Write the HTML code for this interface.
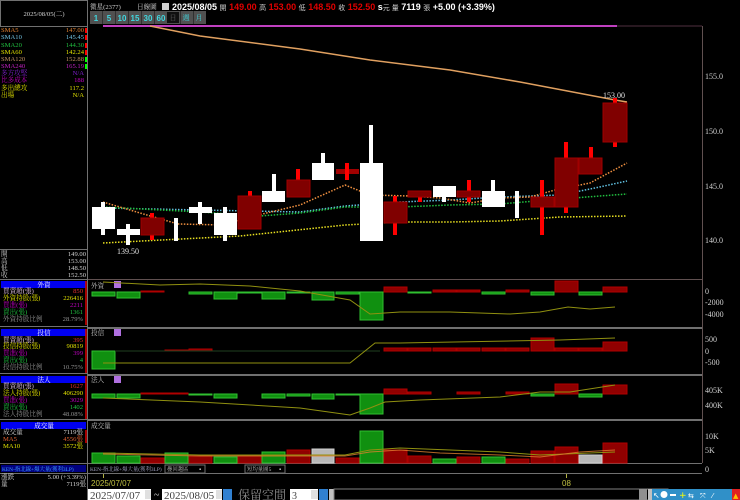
<!DOCTYPE html>
<html><head><meta charset="utf-8"><style>
html,body{margin:0;padding:0;background:#000;width:740px;height:500px;overflow:hidden}
svg{display:block;font-family:"Liberation Serif","Noto Serif CJK SC",serif;font-size:6.6px}
</style></head><body>
<svg width="740" height="500" viewBox="0 0 740 500" xmlns="http://www.w3.org/2000/svg">
<rect width="740" height="500" fill="#000"/>
<rect x="0.5" y="0.5" width="87" height="26" fill="none" stroke="#707070"/>
<text x="44" y="16" fill="#d0d0d0" text-anchor="middle">2025/08/05(二)</text>
<line x1="87.5" y1="0" x2="87.5" y2="500" stroke="#707070"/>
<g>
<text x="1" y="32" fill="#e08030">SMA5</text><text x="84" y="32" fill="#e08030" text-anchor="end">147.00</text>
<text x="1" y="39" fill="#70c0e0">SMA10</text><text x="84" y="39" fill="#70c0e0" text-anchor="end">145.45</text>
<text x="1" y="47" fill="#20c040">SMA20</text><text x="84" y="47" fill="#20c040" text-anchor="end">144.30</text>
<text x="1" y="54" fill="#e0e000">SMA60</text><text x="84" y="54" fill="#e0e000" text-anchor="end">142.24</text>
<text x="1" y="61" fill="#c09060">SMA120</text><text x="84" y="61" fill="#c09060" text-anchor="end">152.88</text>
<text x="1" y="68" fill="#c020c0">SMA240</text><text x="84" y="68" fill="#c020c0" text-anchor="end">165.19</text>
<text x="1" y="75" fill="#8020d0">多方攻堅</text><text x="84" y="75" fill="#8020d0" text-anchor="end">N/A</text>
<text x="1" y="82" fill="#c000c0">比多成本</text><text x="84" y="82" fill="#c000c0" text-anchor="end">188</text>
<text x="1" y="90" fill="#e0e000">多出總攻</text><text x="84" y="90" fill="#e0e000" text-anchor="end">117.2</text>
<text x="1" y="97" fill="#e0e000">出場</text><text x="84" y="97" fill="#e0e000" text-anchor="end">N/A</text>
<rect x="85" y="28" width="2" height="5" fill="#f00"/><rect x="85" y="35" width="2" height="5" fill="#f00"/><rect x="85" y="43" width="2" height="5" fill="#f00"/><rect x="85" y="50" width="2" height="5" fill="#f00"/><rect x="85" y="57" width="2" height="5" fill="#0f0"/><rect x="85" y="64" width="2" height="5" fill="#0f0"/>
</g>
<line x1="0" y1="249.5" x2="87" y2="249.5" stroke="#707070"/>
<text x="1" y="256" fill="#d0d0d0">開</text><text x="86" y="256" fill="#d0d0d0" text-anchor="end">149.00</text>
<text x="1" y="263" fill="#d0d0d0">高</text><text x="86" y="263" fill="#d0d0d0" text-anchor="end">153.00</text>
<text x="1" y="270" fill="#d0d0d0">低</text><text x="86" y="270" fill="#d0d0d0" text-anchor="end">148.50</text>
<text x="1" y="277" fill="#d0d0d0">收</text><text x="86" y="277" fill="#d0d0d0" text-anchor="end">152.50</text>
<line x1="0" y1="279.5" x2="87" y2="279.5" stroke="#707070"/>
<g>
<rect x="1" y="281" width="85" height="7" fill="#0000f0"/><text x="44" y="287" fill="#fff" text-anchor="middle">外資</text>
<text x="3" y="293" fill="#e0c0e0">買賣超(張)</text><text x="83" y="293" fill="#e03030" text-anchor="end">850</text>
<text x="3" y="300" fill="#e0e000">外資持股(張)</text><text x="83" y="300" fill="#e0e000" text-anchor="end">226416</text>
<text x="3" y="307" fill="#c000c0">買進(張)</text><text x="83" y="307" fill="#c000c0" text-anchor="end">2211</text>
<text x="3" y="314" fill="#20c040">賣出(張)</text><text x="83" y="314" fill="#20c040" text-anchor="end">1361</text>
<text x="3" y="321" fill="#909090">外資持股比例</text><text x="83" y="321" fill="#909090" text-anchor="end">28.79%</text>
<line x1="0" y1="326.5" x2="87" y2="326.5" stroke="#707070"/>
<rect x="1" y="329" width="85" height="7" fill="#0000f0"/><text x="44" y="335" fill="#fff" text-anchor="middle">投信</text>
<text x="3" y="342" fill="#e0c0e0">買賣超(張)</text><text x="83" y="342" fill="#e03030" text-anchor="end">395</text>
<text x="3" y="348" fill="#e0e000">投信持股(張)</text><text x="83" y="348" fill="#e0e000" text-anchor="end">90819</text>
<text x="3" y="355" fill="#c000c0">買進(張)</text><text x="83" y="355" fill="#c000c0" text-anchor="end">399</text>
<text x="3" y="362" fill="#20c040">賣出(張)</text><text x="83" y="362" fill="#20c040" text-anchor="end">4</text>
<text x="3" y="369" fill="#909090">投信持股比例</text><text x="83" y="369" fill="#909090" text-anchor="end">10.75%</text>
<line x1="0" y1="373.5" x2="87" y2="373.5" stroke="#707070"/>
<rect x="1" y="376" width="85" height="7" fill="#0000f0"/><text x="44" y="382" fill="#fff" text-anchor="middle">法人</text>
<text x="3" y="388" fill="#e0c0e0">買賣超(張)</text><text x="83" y="388" fill="#e03030" text-anchor="end">1627</text>
<text x="3" y="395" fill="#e0e000">法人持股(張)</text><text x="83" y="395" fill="#e0e000" text-anchor="end">406290</text>
<text x="3" y="402" fill="#c000c0">買進(張)</text><text x="83" y="402" fill="#c000c0" text-anchor="end">3029</text>
<text x="3" y="409" fill="#20c040">賣出(張)</text><text x="83" y="409" fill="#20c040" text-anchor="end">1402</text>
<text x="3" y="416" fill="#909090">法人持股比例</text><text x="83" y="416" fill="#909090" text-anchor="end">48.08%</text>
<line x1="0" y1="419.5" x2="87" y2="419.5" stroke="#707070"/>
<rect x="1" y="422" width="85" height="7" fill="#0000f0"/><text x="44" y="428" fill="#fff" text-anchor="middle">成交量</text>
<text x="3" y="434" fill="#d0d0d0">成交量</text><text x="83" y="434" fill="#d0d0d0" text-anchor="end">7119張</text>
<text x="3" y="441" fill="#e06030">MA5</text><text x="83" y="441" fill="#e06030" text-anchor="end">4556張</text>
<text x="3" y="448" fill="#e0e000">MA10</text><text x="83" y="448" fill="#e0e000" text-anchor="end">3572張</text>
<rect x="85" y="281" width="2" height="44" fill="#d00000" opacity=".8"/>
<rect x="85" y="329" width="2" height="44" fill="#d00000" opacity=".8"/>
<rect x="85" y="376" width="2" height="43" fill="#d00000" opacity=".8"/>
<rect x="85" y="430" width="2" height="13" fill="#d00000" opacity=".8"/>
<line x1="0" y1="463.5" x2="87" y2="463.5" stroke="#707070"/>
<rect x="1" y="465" width="85" height="7" fill="#000080"/><text x="2" y="471" fill="#40a0ff" font-size="5.4">KEN-指北線+爆大量(獲利3LP)</text>
<line x1="0" y1="473.5" x2="87" y2="473.5" stroke="#707070"/>
<text x="1" y="479" fill="#d0d0d0">漲跌</text><text x="86" y="479" fill="#d0d0d0" text-anchor="end">5.00 (+3.39%)</text>
<text x="1" y="486" fill="#d0d0d0">量</text><text x="86" y="486" fill="#d0d0d0" text-anchor="end">7119張</text>
</g>

<text x="90" y="9" fill="#d0d0d0">微星(2377)</text>
<text x="137" y="9" fill="#d0d0d0">日線圖</text>
<rect x="162" y="3" width="7" height="7" fill="#d0d0d0"/>
<text x="172" y="10" font-family="Liberation Sans, Noto Sans CJK TC, sans-serif" font-size="9" font-weight="bold" fill="#fff">2025/08/05 <tspan fill="#ccc" font-weight="normal" font-size="7">開</tspan> <tspan fill="#e00000">149.00</tspan> <tspan fill="#ccc" font-weight="normal" font-size="7">高</tspan> <tspan fill="#e00000">153.00</tspan> <tspan fill="#ccc" font-weight="normal" font-size="7">低</tspan> <tspan fill="#e00000">148.50</tspan> <tspan fill="#ccc" font-weight="normal" font-size="7">收</tspan> <tspan fill="#e00000">152.50</tspan> s<tspan fill="#ccc" font-weight="normal" font-size="7">元 量</tspan> 7119 <tspan fill="#ccc" font-weight="normal" font-size="7">張</tspan> +5.00 (+3.39%)</text>
<rect x="90" y="11" width="116" height="13" fill="#505050"/>
<rect x="167" y="12" width="12" height="11" fill="#101010"/>
<g text-anchor="middle" font-size="8" font-family="Liberation Sans, sans-serif" font-weight="bold" fill="#40d8e0">
<text x="96" y="21">1</text>
<text x="109" y="21">5</text>
<text x="122" y="21">10</text>
<text x="135" y="21">15</text>
<text x="148" y="21">30</text>
<text x="161" y="21">60</text>
</g>
<g text-anchor="middle" font-size="7">
<text x="173" y="20" fill="#606060">日</text>
<text x="186" y="20" fill="#40d8e0">週</text>
<text x="199" y="20" fill="#40d8e0">月</text>
</g>
<g stroke="#303030"><line x1="102.5" y1="11" x2="102.5" y2="24"/><line x1="115.5" y1="11" x2="115.5" y2="24"/><line x1="128.5" y1="11" x2="128.5" y2="24"/><line x1="141.5" y1="11" x2="141.5" y2="24"/><line x1="154.5" y1="11" x2="154.5" y2="24"/><line x1="180.5" y1="11" x2="180.5" y2="24"/><line x1="193.5" y1="11" x2="193.5" y2="24"/></g>

<line x1="103" y1="26" x2="617" y2="26" stroke="#c040c0" stroke-width="2"/>
<line x1="617" y1="26" x2="702" y2="26" stroke="#503040"/>
<line x1="702.5" y1="26" x2="702.5" y2="463" stroke="#605050"/>
<line x1="88" y1="279.5" x2="702" y2="279.5" stroke="#605050"/>
<rect x="88" y="327" width="614" height="2" fill="#707070"/>
<rect x="88" y="374" width="614" height="2" fill="#707070"/>
<rect x="88" y="419" width="614" height="2" fill="#707070"/>
<line x1="88" y1="463.5" x2="702" y2="463.5" stroke="#707070"/>
<line x1="88" y1="473.5" x2="702" y2="473.5" stroke="#707070"/>

<g fill="#d0d0d0" font-size="8">
<text x="705" y="79">155.0</text><text x="705" y="134">150.0</text><text x="705" y="189">145.0</text><text x="705" y="243">140.0</text>
<text x="705" y="294">0</text><text x="705" y="305">-2000</text><text x="705" y="317">-4000</text>
<text x="705" y="342">500</text><text x="705" y="354">0</text><text x="705" y="365">-500</text>
<text x="705" y="393">405K</text><text x="705" y="408">400K</text>
<text x="705" y="439">10K</text><text x="705" y="453">5K</text><text x="705" y="472">0</text>
</g>

<polyline points="150,26 200,36 300,49 370,60 450,70 520,82 615,100 627,102" fill="none" stroke="#e0a060" stroke-width="1.5"/>

<g fill="none" stroke-width="1.5" stroke-dasharray="1.5 1.5">
<polyline stroke="#60c0e0" points="103,208 200,210 300,212 345,206 400,202 450,200 500,197 560,195 595,188 627,181"/>
<polyline stroke="#20c040" points="103,207 200,212 260,216 300,213 345,207 400,207 450,205 500,204 560,199 600,196 627,194"/>
<polyline stroke="#e8e020" points="103,243 240,236 345,225 400,222 450,222 500,221 560,217 627,216"/>
<polyline stroke="#f09040" points="103,202 140,213 178,224 225,225 250,217 300,205 345,185 370,195 410,196 440,198 470,203 500,198 530,197 555,190 590,183 627,163"/>
</g>

<g>
<rect x="101" y="202" width="4" height="33" fill="#fff"/><rect x="92" y="207" width="23" height="22" fill="#fff"/>
<rect x="126" y="224" width="4" height="21" fill="#fff"/><rect x="117" y="229" width="23" height="6" fill="#fff"/>
<rect x="150" y="213" width="4" height="27" fill="#f00"/><rect x="141" y="218" width="23" height="17" fill="#800000" stroke="#a00000"/>
<rect x="174" y="218" width="4" height="23" fill="#fff"/>
<rect x="198" y="202" width="4" height="22" fill="#fff"/><rect x="189" y="207" width="23" height="6" fill="#fff"/>
<rect x="223" y="207" width="4" height="34" fill="#fff"/><rect x="214" y="213" width="23" height="22" fill="#fff"/>
<rect x="248" y="191" width="4" height="38" fill="#f00"/><rect x="238" y="196" width="23" height="33" fill="#800000" stroke="#a00000"/>
<rect x="272" y="174" width="4" height="28" fill="#fff"/><rect x="262" y="191" width="23" height="11" fill="#fff"/>
<rect x="296" y="169" width="4" height="28" fill="#f00"/><rect x="287" y="180" width="23" height="17" fill="#800000" stroke="#a00000"/>
<rect x="321" y="153" width="4" height="27" fill="#fff"/><rect x="312" y="163" width="22" height="17" fill="#fff"/>
<rect x="336" y="169" width="23" height="5" fill="#a00000"/><rect x="345" y="163" width="4" height="17" fill="#f00"/>
<rect x="369" y="125" width="4" height="116" fill="#fff"/><rect x="360" y="163" width="23" height="78" fill="#fff"/>
<rect x="393" y="196" width="4" height="39" fill="#f00"/><rect x="384" y="202" width="23" height="21" fill="#800000" stroke="#a00000"/>
<rect x="418" y="191" width="4" height="11" fill="#f00"/><rect x="408" y="191" width="23" height="6" fill="#800000" stroke="#a00000"/>
<rect x="442" y="186" width="4" height="16" fill="#fff"/><rect x="433" y="186" width="23" height="11" fill="#fff"/>
<rect x="467" y="180" width="4" height="22" fill="#f00"/><rect x="457" y="191" width="23" height="6" fill="#800000" stroke="#a00000"/>
<rect x="491" y="180" width="4" height="27" fill="#fff"/><rect x="482" y="191" width="23" height="16" fill="#fff"/>
<rect x="515" y="191" width="4" height="27" fill="#fff"/>
<rect x="540" y="180" width="4" height="55" fill="#f00"/><rect x="531" y="197" width="23" height="10" fill="#800000" stroke="#a00000"/>
<rect x="564" y="142" width="4" height="71" fill="#f00"/><rect x="555" y="158" width="23" height="49" fill="#800000" stroke="#a00000"/>
<rect x="589" y="147" width="4" height="27" fill="#f00"/><rect x="579" y="158" width="23" height="16" fill="#800000" stroke="#a00000"/>
<rect x="613" y="98" width="4" height="49" fill="#f00"/><rect x="603" y="103" width="24" height="39" fill="#800000" stroke="#a00000"/>
</g>
<text x="117" y="254" fill="#e0e0e0" font-size="8">139.50</text>
<text x="603" y="98" fill="#e0e0e0" font-size="8">153.00</text>

<text x="91" y="288" fill="#c0c0c0">外資</text><rect x="114" y="281" width="7" height="7" fill="#b070e0"/>
<text x="91" y="335" fill="#c0c0c0">投信</text><rect x="114" y="329" width="7" height="7" fill="#b070e0"/>
<text x="91" y="382" fill="#c0c0c0">法人</text><rect x="114" y="376" width="7" height="7" fill="#b070e0"/>
<text x="91" y="428" fill="#c0c0c0">成交量</text>

<g fill="#109010" stroke="#30c030">
<rect x="92" y="292" width="23" height="4"/><rect x="117" y="292" width="23" height="6"/><rect x="189" y="292" width="23" height="2"/><rect x="214" y="292" width="23" height="7"/><rect x="238" y="292" width="23" height="1"/><rect x="262" y="292" width="23" height="7"/><rect x="287" y="292" width="23" height="1"/><rect x="312" y="292" width="22" height="8"/><rect x="336" y="292" width="23" height="2"/><rect x="360" y="292" width="23" height="28"/><rect x="531" y="292" width="23" height="3"/><rect x="579" y="292" width="23" height="3"/>
<rect x="408" y="292" width="23" height="1"/><rect x="482" y="292" width="23" height="2"/>
</g>
<g fill="#900000" stroke="#b00000">
<rect x="141" y="291" width="23" height="1"/><rect x="384" y="287" width="23" height="5"/><rect x="555" y="281" width="23" height="11"/><rect x="603" y="287" width="24" height="5"/><rect x="433" y="290" width="23" height="2"/><rect x="457" y="290" width="23" height="2"/><rect x="506" y="290" width="23" height="2"/>
</g>
<polyline points="103,282 160,285 200,284 250,286 300,291 350,300 370,314 400,312 450,312 510,314 540,312 568,307 590,309 615,307" fill="none" stroke="#909010"/>

<g fill="#109010" stroke="#30c030"><rect x="92" y="351" width="23" height="18"/></g>
<g fill="#900000" stroke="#b00000">
<rect x="165" y="350" width="23" height="1"/><rect x="189" y="349" width="23" height="2"/><rect x="384" y="348" width="23" height="3"/><rect x="408" y="348" width="23" height="3"/><rect x="433" y="348" width="23" height="3"/><rect x="457" y="348" width="23" height="3"/><rect x="482" y="348" width="23" height="3"/><rect x="506" y="348" width="23" height="3"/><rect x="531" y="338" width="23" height="13"/><rect x="555" y="348" width="23" height="3"/><rect x="579" y="348" width="23" height="3"/><rect x="603" y="342" width="24" height="9"/>
</g>
<line x1="115" y1="351" x2="380" y2="351" stroke="#204020"/>
<polyline points="103,363 350,363 375,343 400,343 560,340 615,338" fill="none" stroke="#909010"/>

<g fill="#109010" stroke="#30c030">
<rect x="92" y="394" width="23" height="4"/><rect x="117" y="394" width="23" height="4"/><rect x="189" y="394" width="23" height="1"/><rect x="214" y="394" width="23" height="4"/><rect x="262" y="394" width="23" height="4"/><rect x="287" y="394" width="23" height="2"/><rect x="312" y="394" width="22" height="5"/><rect x="336" y="394" width="23" height="1"/><rect x="360" y="394" width="23" height="20"/><rect x="531" y="394" width="23" height="2"/><rect x="579" y="394" width="23" height="3"/>
</g>
<g fill="#900000" stroke="#b00000">
<rect x="141" y="393" width="23" height="1"/><rect x="165" y="393" width="23" height="1"/><rect x="384" y="389" width="23" height="5"/><rect x="408" y="392" width="23" height="2"/><rect x="457" y="392" width="23" height="2"/><rect x="506" y="392" width="23" height="2"/><rect x="555" y="384" width="23" height="10"/><rect x="603" y="385" width="24" height="9"/>
</g>
<polyline points="103,398 200,402 300,408 350,415 370,408 385,402 420,400 500,397 540,392 570,392 615,385" fill="none" stroke="#909010"/>

<g fill="#109010" stroke="#30c030">
<rect x="92" y="453" width="23" height="10"/><rect x="117" y="456" width="23" height="7"/><rect x="165" y="453" width="23" height="10"/><rect x="214" y="457" width="23" height="6"/><rect x="262" y="452" width="23" height="11"/><rect x="360" y="431" width="23" height="32"/><rect x="433" y="459" width="23" height="4"/><rect x="482" y="457" width="23" height="6"/>
</g>
<g fill="#900000" stroke="#b00000">
<rect x="141" y="458" width="23" height="5"/><rect x="189" y="456" width="23" height="7"/><rect x="238" y="455" width="23" height="8"/><rect x="287" y="450" width="23" height="13"/><rect x="336" y="458" width="23" height="5"/><rect x="384" y="450" width="23" height="13"/><rect x="408" y="456" width="23" height="7"/><rect x="457" y="457" width="23" height="6"/><rect x="506" y="459" width="23" height="4"/><rect x="531" y="451" width="23" height="12"/><rect x="555" y="447" width="23" height="16"/><rect x="603" y="443" width="24" height="20"/>
</g>
<g fill="#b8b8b8" stroke="#d0d0d0"><rect x="312" y="449" width="22" height="14"/><rect x="579" y="455" width="23" height="8"/></g>
<polyline points="103,453 200,455 300,455 345,455 370,450 400,448 500,452 540,455 615,452" fill="none" stroke="#909010"/>
<polyline points="103,454 200,456 300,456 345,456 370,452 400,450 440,453 500,455 540,457 580,452 615,450" fill="none" stroke="#e08030" opacity=".8"/>

<text x="90" y="471" fill="#a0a0c0" font-size="5.4">KEN-指北線+爆大量(獲利3LP)</text>
<rect x="165" y="465" width="40" height="8" fill="#000" stroke="#707070"/><text x="167" y="471" fill="#c0c0c0" font-size="5.4">疊回趨區</text><text x="199" y="471" fill="#c0c0c0" font-size="6">▪</text>
<rect x="245" y="465" width="40" height="8" fill="#000" stroke="#707070"/><text x="247" y="471" fill="#c0c0c0" font-size="5.4">短均量圖5</text><text x="279" y="471" fill="#c0c0c0" font-size="6">▪</text>
<line x1="103.5" y1="474" x2="103.5" y2="478" stroke="#b0b040"/>
<text x="91" y="486" fill="#c0c040" font-size="8" font-family="Liberation Sans, sans-serif">2025/07/07</text>
<line x1="566.5" y1="474" x2="566.5" y2="478" stroke="#b0b040"/>
<text x="562" y="486" fill="#c0c040" font-size="8" font-family="Liberation Sans, sans-serif">08</text>

<rect x="88" y="489" width="63" height="11" fill="#fff"/>
<text x="90" y="499" fill="#404040" font-size="11">2025/07/07</text>
<rect x="145" y="490" width="6" height="9" fill="#e0e0e0"/>
<text x="154" y="498" fill="#d0d0d0" font-size="10">~</text>
<rect x="162" y="489" width="60" height="11" fill="#fff"/>
<text x="164" y="499" fill="#404040" font-size="11">2025/08/05</text>
<rect x="216" y="490" width="6" height="9" fill="#e0e0e0"/>
<rect x="223" y="489" width="9" height="11" fill="#3080d0"/>
<text x="238" y="499" fill="#909090" font-size="12">保留空間</text>
<rect x="290" y="489" width="28" height="11" fill="#fff"/>
<text x="292" y="499" fill="#404040" font-size="10">3</text>
<rect x="311" y="490" width="7" height="9" fill="#e0e0e0"/>
<rect x="319" y="489" width="9" height="11" fill="#3080d0"/>
<rect x="329" y="489" width="5" height="11" fill="#c0c0c0"/>
<rect x="334" y="489" width="334" height="11" fill="#000" stroke="#808080"/>
<rect x="639" y="489" width="8" height="11" fill="#909090"/>
<rect x="648" y="489" width="5" height="11" fill="#c0c0c0"/>
<rect x="652" y="489" width="80" height="11" fill="#3090c8"/>
<rect x="732" y="489" width="8" height="11" fill="#e02020"/>
<g fill="#fff" font-family="DejaVu Sans, sans-serif" font-size="7">
<text x="653" y="498" font-size="8">↖</text><circle cx="664" cy="494.5" r="3.5" fill="#fff"/><rect x="670" y="494" width="6" height="2" fill="#fff"/><text x="679" y="498" fill="#ff0" font-size="9">+</text><text x="688" y="498">⇆</text><text x="700" y="498">⤧</text><text x="712" y="498">⁄</text><text x="733" y="498" fill="#ffc000">▲</text>
</g>
</svg>
</body></html>
